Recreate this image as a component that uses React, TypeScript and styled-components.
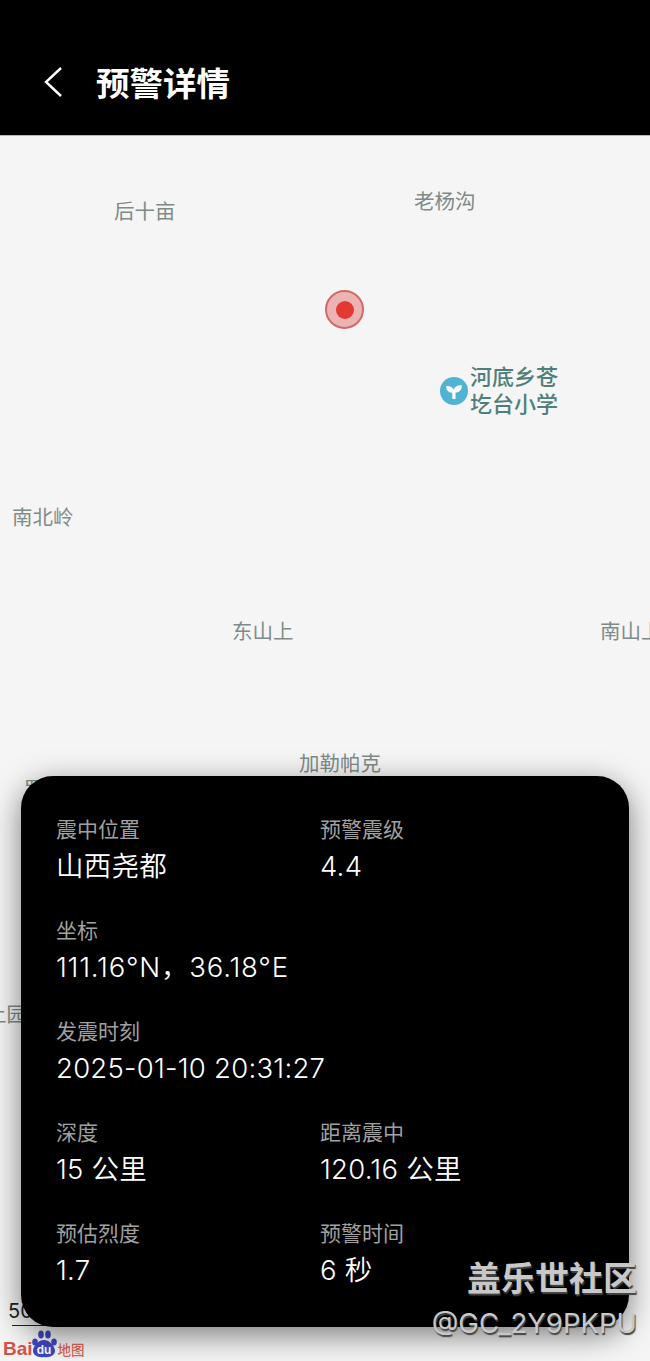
import React from "react";
import styled, { createGlobalStyle } from "styled-components";

const Global = createGlobalStyle`
  html, body { margin: 0; padding: 0; background: #f5f5f5; }
  body { font-family: Inter, "Noto Sans CJK SC", sans-serif; }
`;
const Page = styled.div`
  width: 650px; height: 1361px; display: flex; flex-direction: column; overflow: hidden; position: relative;
`;
const Header = styled.header`
  height: 136px; flex: none; background: #000; display: flex; align-items: center;
  padding: 28px 0 0 44px; box-sizing: border-box; gap: 33px; border-bottom: 1px solid #bbb;
`;
const BackIcon = styled.svg`
  width: 19px; height: 32px; flex: none;
`;
const Title = styled.h1`
  margin: 0; color: #fff; font: 700 33.5px/1 "Noto Sans CJK SC", sans-serif; letter-spacing: 0;
`;
const MapArea = styled.main`
  flex: 1; position: relative; background: #f5f5f5; overflow: hidden;
`;
const Place = styled.span<{ $x: number; $y: number }>`
  position: absolute; left: ${p => p.$x}px; top: ${p => p.$y}px;
  font: 400 20.5px/24px "Noto Sans CJK SC", sans-serif; color: #7f8b89; white-space: nowrap;
`;
const Marker = styled.div`
  position: absolute; left: 325px; top: 154px; width: 39px; height: 39px; box-sizing: border-box;
  border-radius: 50%; border: 2px solid #cf6a68; background: #ecb3b2;
  display: flex; align-items: center; justify-content: center;
`;
const MarkerDot = styled.div`
  width: 18px; height: 18px; border-radius: 50%; background: #e23a33;
`;
const School = styled.div`
  position: absolute; left: 440px; top: 226px; display: flex; align-items: center; gap: 3px;
`;
const SchoolIcon = styled.svg`
  width: 28px; height: 28px; flex: none; margin-top: 4px;
`;
const SchoolName = styled.div`
  font: 500 22px/27px "Noto Sans CJK SC", sans-serif; color: #4f7f7b; margin-left: -1px;
`;
const Scale = styled.div`
  position: absolute; left: 12px; top: 1162px; width: 70px; height: 27px; border-bottom: 1px solid #222;
  font: 400 20px/26px Inter, sans-serif; color: #222; text-indent: -4px;
`;
const BaiduLogo = styled.div`
  position: absolute; left: 3px; bottom: 3px; display: flex; align-items: flex-end;
  font: 700 19px/19px "Liberation Sans", sans-serif; color: #d9534a;
`;
const BaiduPaw = styled.svg`
  width: 26px; height: 28px; margin: 0 1px 0 -2px; flex: none;
`;
const BaiduMap = styled.span`
  font: 500 13.5px/17px "Noto Sans CJK SC", sans-serif; color: #d9635a;
`;
const Card = styled.section`
  position: absolute; left: 21px; top: 640px; width: 608px; height: 551px; box-sizing: border-box;
  background: #000; border-radius: 32px; padding: 39px 35px 0;
  box-shadow: 0 8px 30px rgba(0, 0, 0, 0.5);
  display: flex; flex-direction: column; gap: 26px;
`;
const Row = styled.div`
  display: grid; grid-template-columns: 264px 1fr; height: 75px;
`;
const Field = styled.div`
  display: flex; flex-direction: column; gap: 6px;
`;
const Label = styled.div`
  font: 400 21px/27px "Noto Sans CJK SC", sans-serif; color: #a0a0a0; white-space: nowrap;
`;
const Value = styled.div<{ $wide?: boolean }>`
  font: 350 27.5px/36px Inter, "Noto Sans CJK SC", sans-serif; color: #fff; white-space: nowrap;
  letter-spacing: ${p => (p.$wide ? "0.8px" : "0.25px")};
`;
const Watermark = styled.div`
  position: absolute; right: 13px; bottom: 20px; text-align: right; color: #c8c8c8;
  text-shadow: 1px 2px 1px #444; white-space: nowrap;
`;
const WatermarkBrand = styled.div`
  font: 700 34px/42px "Noto Sans CJK SC", sans-serif; margin-bottom: 7px;
`;
const WatermarkUser = styled.div`
  font: 400 27.5px/36px Inter, sans-serif;
`;

const places: [string, number, number][] = [
  ["后十亩", 114, 62], ["老杨沟", 414, 52], ["南北岭", 12, 368], ["东山上", 232, 482],
  ["南山上", 600, 482], ["加勒帕克", 299, 614], ["罗", 24, 640], ["上园", -14, 865],
];
const rows: { l: string; v: string; l2?: string; v2?: string; wide?: boolean }[] = [
  { l: "震中位置", v: "山西尧都", l2: "预警震级", v2: "4.4" },
  { l: "坐标", v: "111.16°N，36.18°E", wide: true },
  { l: "发震时刻", v: "2025-01-10 20:31:27" },
  { l: "深度", v: "15 公里", l2: "距离震中", v2: "120.16 公里" },
  { l: "预估烈度", v: "1.7", l2: "预警时间", v2: "6 秒" },
];

export default function App() {
  return (
    <Page>
      <Global />
      <Header>
        <BackIcon viewBox="0 0 19 32" fill="none" stroke="#fff" strokeWidth="2.4">
          <path d="M17 2 2 16l15 14" />
        </BackIcon>
        <Title>预警详情</Title>
      </Header>
      <MapArea>
        {places.map(([t, x, y]) => <Place key={t} $x={x} $y={y}>{t}</Place>)}
        <Marker><MarkerDot /></Marker>
        <School>
          <SchoolIcon viewBox="0 0 28 28">
            <circle cx="14" cy="14" r="14" fill="#4fb3d3" />
            <path d="M12.300 22v-6.200C8 15.500 6 13 6.300 9c3.500-.3 6.200 1 7.500 3.400C15 9.500 18 8 21.800 8.400c.2 4-2 6.800-6.300 7.200V22z" fill="#fff" />
          </SchoolIcon>
          <SchoolName>河底乡苍<br />圪台小学</SchoolName>
        </School>
        <Scale>50</Scale>
        <BaiduLogo>
          Bai
          <BaiduPaw viewBox="0 0 26 28">
            <g fill="#3f46c4">
              <ellipse cx="4" cy="12" rx="2.800" ry="3.600" />
              <ellipse cx="10" cy="4.500" rx="2.800" ry="4" />
              <ellipse cx="17" cy="4.500" rx="2.800" ry="4" />
              <ellipse cx="23" cy="12" rx="2.800" ry="3.600" />
              <path d="M13 10c5 0 10 5 11 10 .6 5-5 8-11 7-6 1-11.600-2-11-7 1-5 6-10 11-10z" />
            </g>
            <text x="13" y="24" textAnchor="middle" fill="#fff" fontFamily="Liberation Sans, sans-serif" fontSize="12" fontWeight="700">du</text>
          </BaiduPaw>
          <BaiduMap>地图</BaiduMap>
        </BaiduLogo>
        <Card>
          {rows.map(r => (
            <Row key={r.l}>
              <Field><Label>{r.l}</Label><Value $wide={r.wide}>{r.v}</Value></Field>
              {r.l2 && <Field><Label>{r.l2}</Label><Value>{r.v2}</Value></Field>}
            </Row>
          ))}
        </Card>
      </MapArea>
      <Watermark>
        <WatermarkBrand>盖乐世社区</WatermarkBrand>
        <WatermarkUser>@GC_2Y9PKPU</WatermarkUser>
      </Watermark>
    </Page>
  );
}
